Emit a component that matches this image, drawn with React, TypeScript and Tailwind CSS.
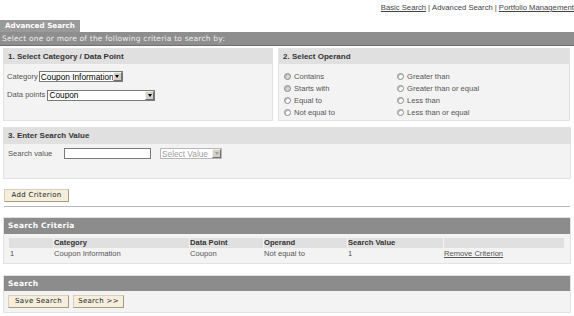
import React from 'react'

const verdana = { fontFamily: '"DejaVu Sans", Verdana, sans-serif' }

function Radio({ label, dim }: { label: string; dim?: boolean }) {
  return (
    <label className="flex items-center h-[11.8px] gap-[3px]">
      <span className={`w-[7px] h-[7px] rounded-full border border-[#8a8a8a] shadow-[inset_1px_1px_0_#bdbdbd] ${dim ? 'bg-[#d6d6d6]' : 'bg-white'}`} />
      <span>{label}</span>
    </label>
  )
}

function SelectBox({ text, width, disabled }: { text: string; width: string; disabled?: boolean }) {
  return (
    <div className={`flex items-center h-[11px] border ${disabled ? 'border-[#b8b8b8] text-[#a0a0a0]' : 'border-[#7a7a7a] text-black'} bg-white ${width}`}>
      <span className="flex-1 pl-[1px] text-[8.3px] leading-none whitespace-nowrap overflow-hidden">{text}</span>
      <span className="w-[9px] h-[9px] bg-[#d4d0c8] border border-[#f0f0f0] border-r-[#707070] border-b-[#707070] flex items-center justify-center">
        <span className={`w-0 h-0 border-l-[2.5px] border-r-[2.5px] border-t-[3px] border-l-transparent border-r-transparent ${disabled ? 'border-t-[#a0a0a0]' : 'border-t-black'}`} />
      </span>
    </div>
  )
}

function Button({ children, width }: { children: React.ReactNode; width: string }) {
  return (
    <button
      style={verdana}
      className={`h-[13px] ${width} bg-[#f6eedc] border border-[#d9cfb8] border-r-[#a89a7c] border-b-[#a89a7c] text-[7px] text-[#222] leading-none tracking-[0.3px] whitespace-nowrap`}
    >
      {children}
    </button>
  )
}

const cols = 'grid grid-cols-[44px_135px_73px_83px_95px_120px] gap-x-[1px]'

export default function App() {
  return (
    <div className="w-[574px] h-[316px] bg-white overflow-hidden text-[7.6px] text-[#555]" style={{ fontFamily: '"Liberation Sans", Arial, sans-serif' }}>
      <div className="flex justify-end h-[20px] pt-[2px] text-[7.7px] text-[#444]">
        <span className="underline">Basic Search</span>
        <span className="mx-[2px]">|</span>
        <span>Advanced Search</span>
        <span className="mx-[2px]">|</span>
        <span className="underline">Portfolio Management</span>
      </div>

      <div style={verdana} className="w-[80px] h-[12px] bg-[#9a9a9a] text-white font-bold text-[7.2px] leading-[12px] pl-[5px] whitespace-nowrap overflow-hidden">
        Advanced Search
      </div>
      <div style={verdana} className="h-[14px] bg-[#8e8e8e] border-b border-[#6f6f6f] text-[#ededed] text-[7.5px] leading-[13px] pl-[2px] tracking-[0.2px] whitespace-nowrap">
        Select one or more of the following criteria to search by:
      </div>

      <div className="flex gap-[5px] pl-[3px] pt-[2px]">
        <div className="w-[270px] h-[73px] bg-[#f3f3f3] border border-[#e2e2e2]">
          <div className="h-[15px] bg-[#e0e0e0] pl-[4px] font-bold text-[8px] text-[#333] leading-[15px]">1. Select Category / Data Point</div>
          <div className="flex flex-col gap-[7px] pl-[3px] pt-[7px]">
            <div className="flex items-center gap-[1px]">
              <span>Category</span>
              <SelectBox text="Coupon Information" width="w-[84px]" />
            </div>
            <div className="flex items-center gap-[2px]">
              <span>Data points</span>
              <SelectBox text="Coupon" width="w-[108px]" />
            </div>
          </div>
        </div>

        <div className="w-[292px] h-[73px] bg-[#f3f3f3] border border-[#e2e2e2]">
          <div className="h-[15px] bg-[#e0e0e0] pl-[4px] font-bold text-[8px] text-[#333] leading-[15px]">2. Select Operand</div>
          <div className="grid grid-cols-[113px_1fr] pl-[5px] pt-[7px]">
            <div className="flex flex-col">
              <Radio label="Contains" dim />
              <Radio label="Starts with" dim />
              <Radio label="Equal to" />
              <Radio label="Not equal to" />
            </div>
            <div className="flex flex-col">
              <Radio label="Greater than" />
              <Radio label="Greater than or equal" />
              <Radio label="Less than" />
              <Radio label="Less than or equal" />
            </div>
          </div>
        </div>
      </div>

      <div className="mx-[3px] mt-[6px] h-[52px] bg-[#f3f3f3] border border-[#e2e2e2]">
        <div className="h-[16px] bg-[#e0e0e0] pl-[4px] font-bold text-[8px] text-[#333] leading-[16px]">3. Enter Search Value</div>
        <div className="flex items-center pl-[4px] pt-[4px]">
          <span className="w-[56px]">Search value</span>
          <div className="w-[87px] h-[11px] bg-white border border-[#7a7a7a]" />
          <div className="ml-[9px]">
            <SelectBox text="Select Value" width="w-[62px]" disabled />
          </div>
        </div>
      </div>

      <div className="pl-[4px] pt-[10px]">
        <Button width="w-[65px]">Add Criterion</Button>
      </div>
      <div className="mx-[4px] mt-[4px] h-[1px] bg-[#b5b5b5]" />

      <div className="mx-[3px] mt-[10px] border border-[#e2e2e2] bg-[#f3f3f3]">
        <div style={verdana} className="h-[16px] bg-[#8c8c8c] text-white font-bold text-[7.5px] leading-[16px] pl-[4px] tracking-[0.2px]">Search Criteria</div>
        <div className="px-[5px] pt-[4px] pb-[3px]">
          <div className={`${cols} h-[10px] leading-[10px] font-bold text-[#333]`}>
            <div className="bg-[#e0e0e0]" />
            <div className="bg-[#e0e0e0]">Category</div>
            <div className="bg-[#e0e0e0]">Data Point</div>
            <div className="bg-[#e0e0e0]">Operand</div>
            <div className="bg-[#e0e0e0]">Search Value</div>
            <div className="bg-[#e0e0e0]" />
          </div>
          <div className={`${cols} h-[12px] leading-[12px]`}>
            <div className="pl-[1px]">1</div>
            <div>Coupon Information</div>
            <div>Coupon</div>
            <div>Not equal to</div>
            <div>1</div>
            <div className="underline">Remove Criterion</div>
          </div>
        </div>
      </div>

      <div className="mx-[3px] mt-[11px] border border-[#e2e2e2] bg-[#f3f3f3] h-[38px]">
        <div style={verdana} className="h-[15px] bg-[#8c8c8c] text-white font-bold text-[7.5px] leading-[15px] pl-[4px] tracking-[0.2px]">Search</div>
        <div className="flex gap-[4px] pl-[4px] pt-[4px]">
          <Button width="w-[61px]">Save Search</Button>
          <Button width="w-[51px]">Search &gt;&gt;</Button>
        </div>
      </div>
    </div>
  )
}
